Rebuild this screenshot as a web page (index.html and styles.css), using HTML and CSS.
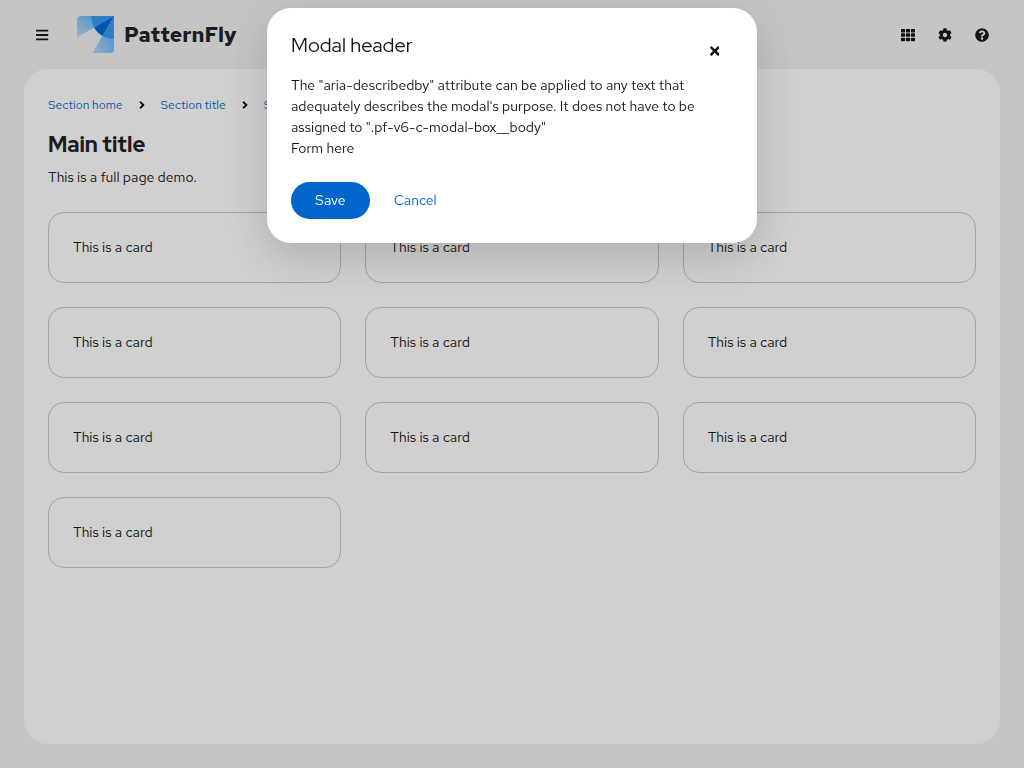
FILE: index.html
```html
<!DOCTYPE html>
<html lang="en">
<head>
<meta charset="utf-8">
<meta name="viewport" content="width=device-width, initial-scale=1">
<title>PatternFly modal demo</title>
<link rel="stylesheet" href="styles.css">
</head>
<body>
<div class="page">
  <header class="masthead">
    <button class="icon-button" type="button" aria-label="Global navigation">
      <svg class="icon" viewBox="0 0 448 512"><path d="M16 132h416c9 0 16-7 16-16V76c0-9-7-16-16-16H16C7 60 0 67 0 76v40c0 9 7 16 16 16zm0 160h416c9 0 16-7 16-16v-40c0-9-7-16-16-16H16c-9 0-16 7-16 16v40c0 9 7 16 16 16zm0 160h416c9 0 16-7 16-16v-40c0-9-7-16-16-16H16c-9 0-16 7-16 16v40c0 9 7 16 16 16z"/></svg>
    </button>
    <a class="brand" href="#">
      <svg class="brand-mark" viewBox="0 0 37 37" aria-hidden="true">
        <defs>
          <linearGradient id="wing-left" x1="1" y1="0" x2="0" y2="0.8"><stop offset="0.3" stop-color="#5eb4f8"/><stop offset="1" stop-color="#b4d4f6"/></linearGradient>
          <linearGradient id="wing-bottom" x1="1" y1="0.3" x2="0.1" y2="1"><stop offset="0.1" stop-color="#5eb4f8"/><stop offset="1" stop-color="#b4d4f6"/></linearGradient>
        </defs>
        <path fill="url(#wing-left)" d="M0 4Q0 0 4 0H37L0 21.5Z"/>
        <path fill="url(#wing-bottom)" d="M37 0V33Q37 37 33 37H15.5Z"/>
        <path fill="#3599f2" d="M37 0H14.3Q14.3 6.5 17.1 11.6ZM37 0V23Q31 23 25.4 19.9Z"/>
        <path fill="#0066d4" d="M37 0L17.1 11.6Q20 17 25.4 19.9Z"/>
      </svg>
      <span class="brand-name">PatternFly</span>
    </a>
    <div class="tools">
      <button class="icon-button" type="button" aria-label="Applications">
        <svg class="icon" viewBox="0 0 512 512"><path d="M24 32h102c13 0 24 11 24 24v80c0 13-11 24-24 24H24c-13 0-24-11-24-24V56c0-13 11-24 24-24zm181 0h102c13 0 24 11 24 24v80c0 13-11 24-24 24H205c-13 0-24-11-24-24V56c0-13 11-24 24-24zm181 0h102c13 0 24 11 24 24v80c0 13-11 24-24 24H386c-13 0-24-11-24-24V56c0-13 11-24 24-24zM24 192h102c13 0 24 11 24 24v80c0 13-11 24-24 24H24c-13 0-24-11-24-24v-80c0-13 11-24 24-24zm181 0h102c13 0 24 11 24 24v80c0 13-11 24-24 24H205c-13 0-24-11-24-24v-80c0-13 11-24 24-24zm181 0h102c13 0 24 11 24 24v80c0 13-11 24-24 24H386c-13 0-24-11-24-24v-80c0-13 11-24 24-24zM24 352h102c13 0 24 11 24 24v80c0 13-11 24-24 24H24c-13 0-24-11-24-24v-80c0-13 11-24 24-24zm181 0h102c13 0 24 11 24 24v80c0 13-11 24-24 24H205c-13 0-24-11-24-24v-80c0-13 11-24 24-24zm181 0h102c13 0 24 11 24 24v80c0 13-11 24-24 24H386c-13 0-24-11-24-24v-80c0-13 11-24 24-24z"/></svg>
      </button>
      <button class="icon-button" type="button" aria-label="Settings">
        <svg class="icon" viewBox="0 0 512 512"><path d="M487.4 315.7l-42.6-24.6c4.3-23.2 4.3-47 0-70.2l42.6-24.6c4.9-2.8 7.1-8.6 5.5-14-11.1-35.6-30-67.8-54.7-94.6-3.8-4.1-10-5.1-14.8-2.3L380.8 110c-17.9-15.4-38.5-27.3-60.8-35.1V25.8c0-5.6-3.9-10.5-9.4-11.7-36.7-8.2-74.3-7.8-109.2 0-5.5 1.2-9.4 6.1-9.4 11.7V75c-22.2 7.9-42.8 19.8-60.8 35.1L88.7 85.5c-4.9-2.8-11-1.9-14.8 2.3-24.7 26.7-43.6 58.9-54.7 94.6-1.7 5.4.6 11.2 5.5 14L67.3 221c-4.3 23.2-4.3 47 0 70.2l-42.6 24.6c-4.9 2.8-7.1 8.6-5.5 14 11.1 35.6 30 67.8 54.7 94.6 3.8 4.1 10 5.1 14.8 2.3l42.6-24.6c17.9 15.4 38.5 27.3 60.8 35.1v49.2c0 5.6 3.9 10.5 9.4 11.7 36.7 8.2 74.3 7.8 109.2 0 5.5-1.2 9.4-6.1 9.4-11.7v-49.2c22.2-7.9 42.8-19.8 60.8-35.1l42.6 24.6c4.9 2.8 11 1.9 14.8-2.3 24.7-26.7 43.6-58.9 54.7-94.6 1.5-5.5-.7-11.3-5.6-14.1zM256 336c-44.1 0-80-35.9-80-80s35.9-80 80-80 80 35.9 80 80-35.9 80-80 80z"/></svg>
      </button>
      <button class="icon-button" type="button" aria-label="Help">
        <svg class="icon" viewBox="0 0 512 512"><path d="M504 256c0 136.997-111.043 248-248 248S8 392.997 8 256C8 119.083 119.043 8 256 8s248 111.083 248 248zM262.655 90c-54.497 0-89.255 22.957-116.549 63.758-3.536 5.286-2.353 12.415 2.715 16.258l34.699 26.31c5.205 3.947 12.621 3.008 16.665-2.122 17.864-22.658 30.113-35.797 57.303-35.797 20.429 0 45.698 13.148 45.698 32.958 0 14.976-12.363 22.667-32.534 33.976C247.128 238.528 216 254.941 216 296v4c0 6.627 5.373 12 12 12h56c6.627 0 12-5.373 12-12v-1.333c0-28.462 83.186-29.647 83.186-106.667 0-58.002-60.165-102-116.531-102zM256 338c-25.365 0-46 20.635-46 46 0 25.364 20.635 46 46 46s46-20.636 46-46c0-25.365-20.635-46-46-46z"/></svg>
      </button>
    </div>
  </header>
  <main class="main">
    <nav aria-label="Breadcrumb">
      <ol class="breadcrumb">
        <li><a href="#">Section home</a></li>
        <li><svg class="angle" viewBox="0 0 256 512" aria-hidden="true"><path d="M224.3 273l-136 136c-9.4 9.4-24.6 9.4-33.9 0l-22.6-22.6c-9.4-9.4-9.4-24.6 0-33.9l96.4-96.4-96.4-96.4c-9.4-9.4-9.4-24.6 0-33.9L54.3 103c9.4-9.4 24.6-9.4 33.9 0l136 136c9.5 9.4 9.5 24.6.1 34z"/></svg><a href="#">Section title</a></li>
        <li><svg class="angle" viewBox="0 0 256 512" aria-hidden="true"><path d="M224.3 273l-136 136c-9.4 9.4-24.6 9.4-33.9 0l-22.6-22.6c-9.4-9.4-9.4-24.6 0-33.9l96.4-96.4-96.4-96.4c-9.4-9.4-9.4-24.6 0-33.9L54.3 103c9.4-9.4 24.6-9.4 33.9 0l136 136c9.5 9.4 9.5 24.6.1 34z"/></svg><a href="#">Section title</a></li>
      </ol>
    </nav>
    <h1 class="title">Main title</h1>
    <p class="intro">This is a full page demo.</p>
    <div class="gallery">
      <article class="card">This is a card</article>
      <article class="card">This is a card</article>
      <article class="card">This is a card</article>
      <article class="card">This is a card</article>
      <article class="card">This is a card</article>
      <article class="card">This is a card</article>
      <article class="card">This is a card</article>
      <article class="card">This is a card</article>
      <article class="card">This is a card</article>
      <article class="card">This is a card</article>
    </div>
  </main>
</div>
<div class="backdrop">
  <section class="modal" role="dialog" aria-modal="true" aria-labelledby="modal-title" aria-describedby="modal-description">
    <header class="modal-header">
      <h2 class="modal-title" id="modal-title">Modal header</h2>
      <button class="icon-button" type="button" aria-label="Close">
        <svg class="icon" viewBox="0 0 352 512"><path d="M242.72 256l100.07-100.07c12.28-12.28 12.28-32.19 0-44.48l-22.24-22.24c-12.28-12.28-32.19-12.28-44.48 0L176 189.28 75.93 89.21c-12.28-12.28-32.19-12.28-44.48 0L9.21 111.45c-12.28 12.28-12.28 32.19 0 44.48L109.28 256 9.21 356.07c-12.28 12.28-12.28 32.19 0 44.48l22.24 22.24c12.28 12.28 32.2 12.28 44.48 0L176 322.72l100.07 100.07c12.28 12.28 32.2 12.28 44.48 0l22.24-22.24c12.28-12.28 12.28-32.19 0-44.48L242.72 256z"/></svg>
      </button>
    </header>
    <div class="modal-body">
      <p id="modal-description">The "aria-describedby" attribute can be applied to any text that adequately describes the modal's purpose. It does not have to be assigned to ".pf-v6-c-modal-box__body"</p>
      <p>Form here</p>
    </div>
    <footer class="modal-footer">
      <button class="button primary" type="button">Save</button>
      <button class="button link" type="button">Cancel</button>
    </footer>
  </section>
</div>
</body>
</html>
```
FILE: styles.css
```css
* {
  box-sizing: border-box;
}

body {
  margin: 0;
  color: #151515;
  background: #f2f2f2;
  font-family: "Red Hat Text", Lato, "Noto Sans", sans-serif;
  font-size: 14px;
  line-height: 21px;
}

h1, h2, p, ol {
  margin: 0;
  padding: 0;
}

a {
  color: #0066cc;
  text-decoration: none;
}

button {
  border: 0;
  font: inherit;
}

.page {
  display: flex;
  flex-direction: column;
  min-height: 100vh;
  padding: 0 24px 24px;
}

.masthead {
  display: flex;
  align-items: center;
  min-height: 69px;
}

.icon-button {
  display: flex;
  align-items: center;
  justify-content: center;
  width: 37px;
  height: 37px;
  padding: 0;
  color: #151515;
  background: transparent;
}

.icon {
  height: 14px;
  fill: currentColor;
}

.brand {
  display: flex;
  align-items: center;
  gap: 10px;
  margin-left: 16px;
  color: #1f1f1f;
}

.brand-mark {
  width: 37px;
  height: 37px;
}

.brand-name {
  font-size: 21px;
  font-weight: 700;
  line-height: 37px;
}

.tools {
  display: flex;
  margin-left: auto;
}

.main {
  flex: 1;
  padding: 24px;
  background: #ffffff;
  border-radius: 24px;
}

.breadcrumb {
  display: flex;
  gap: 16px;
  list-style: none;
  font-size: 12px;
  line-height: 24px;
}

.breadcrumb li {
  display: flex;
  align-items: center;
  gap: 16px;
}

.angle {
  height: 12px;
}

.title {
  margin-top: 12px;
  color: #1f1f1f;
  font-family: "Red Hat Display", "Red Hat Text", Lato, sans-serif;
  font-size: 22px;
  font-weight: 800;
  line-height: 32px;
}

.intro {
  margin-top: 6px;
}

.gallery {
  display: grid;
  grid-template-columns: repeat(3, 1fr);
  gap: 24px;
  margin-top: 24px;
}

.card {
  padding: 24px;
  border: 1px solid #c7c7c7;
  border-radius: 16px;
}

.backdrop {
  position: fixed;
  inset: 0;
  display: flex;
  align-items: flex-start;
  justify-content: center;
  padding: 8px;
  background: rgba(21, 21, 21, 0.2);
}

.modal {
  width: 100%;
  max-width: 490px;
  padding: 24px;
  background: #ffffff;
  border-radius: 24px;
  box-shadow: 0 12px 40px rgba(41, 41, 41, 0.2);
}

.modal-header {
  display: flex;
  justify-content: space-between;
  align-items: flex-start;
}

.modal-title {
  font-family: "Red Hat Display", "Red Hat Text", Lato, sans-serif;
  font-size: 20px;
  font-weight: 400;
  line-height: 26px;
}

.modal-body {
  margin-top: 6px;
}

.modal-footer {
  display: flex;
  margin-top: 23px;
}

.button {
  padding: 8px 24px;
  border-radius: 24px;
}

.primary {
  color: #ffffff;
  background: #0066cc;
}

.link {
  color: #0066cc;
  background: transparent;
}
```
